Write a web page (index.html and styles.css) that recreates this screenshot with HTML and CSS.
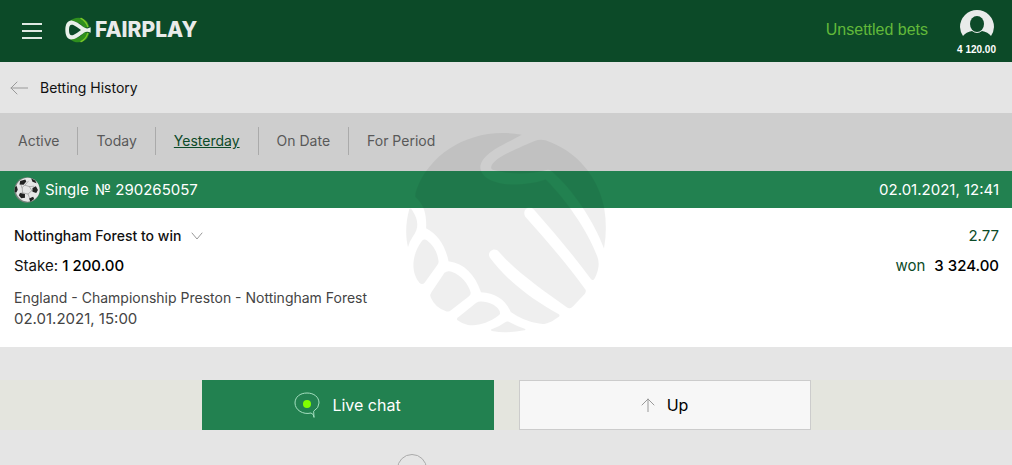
FILE: index.html
```html
<!DOCTYPE html>
<html lang="en">
<head>
    <meta charset="UTF-8">
    <meta name="viewport" content="width=device-width, initial-scale=1.0">
    <title>Betting History</title>
    <link rel="stylesheet" href="styles.css">
</head>
<body>
    <header class="header">
        <button class="menu" aria-label="Menu"><span></span><span></span><span></span></button>
        <a class="logo" href="#">
            <svg class="logo-icon" viewBox="0 0 78 78" aria-hidden="true">
                <path fill="#2f8f1e" d="M14 13C28 -2 54 -2 67 15L74 31Q66 30 58 33Q42 10 14 13Z"/>
                <path fill="#2f8f1e" d="M14 65C28 80 54 80 67 63L74 47Q66 48 58 45Q42 68 14 65Z"/>
                <path fill="none" stroke="#7cc829" stroke-width="4" d="M48 4Q64 13 68 29M48 74Q64 65 68 49"/>
                <path fill="#e9f1ea" fill-rule="evenodd" d="M1 39C1 20 9 9 22 11C37 13 50 27 61 33Q68 36 77 31V47Q68 42 61 45C50 51 37 65 22 67C9 69 1 58 1 39ZM12 39C12 52 16 57 25 54Q37 48 48 39Q37 30 25 24C16 21 12 26 12 39Z"/>
            </svg>
            <span>FAIRPLAY</span>
        </a>
        <a class="unsettled" href="#">Unsettled bets</a>
        <a class="account" href="#">
            <svg class="avatar" viewBox="0 0 34 28" aria-hidden="true">
                <path fill="#e9ebea" fill-rule="evenodd" d="M3 26A17 17 0 0 1 0 17A17 17 0 0 1 34 17A17 17 0 0 1 31 26Q28 22 22 21Q17 25 12 21Q6 22 3 26Z"/>
                <ellipse cx="17" cy="14" rx="7" ry="8" fill="#0c4a28"/>
            </svg>
            <span>4 120.00</span>
        </a>
    </header>

    <main class="main">
        <div class="title">
            <a href="#" aria-label="Back">
                <svg class="back" viewBox="0 0 18 14"><path d="M18 7H1M7 1L1 7L7 13"/></svg>
            </a>
            <h1>Betting History</h1>
        </div>

        <nav class="tabs">
            <a href="#">Active</a>
            <a href="#">Today</a>
            <a href="#" class="active">Yesterday</a>
            <a href="#">On Date</a>
            <a href="#">For Period</a>
        </nav>

        <section class="bet">
            <div class="bet-head">
                <svg class="ball" viewBox="0 0 76 76" aria-hidden="true">
                    <circle cx="38" cy="38" r="37" fill="#77817b"/>
                    <circle cx="40" cy="37" r="35" fill="#e6e6e6"/>
                    <path fill="none" stroke="#999" stroke-width="2" d="M32 24L45 28L52 40L41 50L25 46L24 32ZM24 32L20 22M32 24L42 12M45 28L58 27M52 40L58 40M41 50L45 60M25 46L17 48M28 50L30 60"/>
                    <path fill="#222" d="M18 12L33 7L36 13L28 23L16 22ZM50 4L62 10L66 18L54 14ZM54 32L64 27L70 38L65 47L54 43ZM18 47L32 50L32 61L21 62L14 53ZM44 63L56 58L59 64L48 72ZM3 30L8 26L11 37L7 45L2 43Z"/>
                </svg>
                <span class="kind">Single</span>
                <span>№ 290265057</span>
                <time>02.01.2021, 12:41</time>
            </div>
            <div class="bet-body">
                <div class="row">
                    <button class="pick">Nottingham Forest to win
                        <svg class="chevron" viewBox="0 0 12 8"><path d="M1 1L6 7L11 1"/></svg>
                    </button>
                    <span class="green">2.77</span>
                </div>
                <div class="row">
                    <span>Stake: <b>1 200.00</b></span>
                    <span><span class="won">won</span><b>3 324.00</b></span>
                </div>
                <p class="event">England - Championship Preston - Nottingham Forest</p>
                <time class="event-date">02.01.2021, 15:00</time>
            </div>
        </section>

        <svg class="handshake" viewBox="50 40 597 597" aria-hidden="true">
            <path d="M395 45C350 72 270 100 272 145C276 178 325 195 378 194Q425 193 467 179C525 235 598 340 623 415Q630 442 613 474Q608 482 602 476C550 405 490 335 433 270C417 252 395 270 406 290C460 350 530 430 586 508Q588 514 584 520L548 558Q540 567 531 561C460 510 380 455 328 395C314 378 290 395 300 412C350 480 430 540 506 581Q511 585 504 590C480 607 465 613 448 609Q400 601 363 574C345 535 317 518 274 515C255 462 225 430 177 423C168 377 145 342 110 324C112 285 105 255 78 231Q77 220 82 207C125 95 250 20 395 45Z"/>
            <path d="M434 64Q450 57 466 62C560 94 621 168 641 260Q652 325 641 385C613 305 545 205 485 154Q477 148 466 151C420 164 355 164 309 150Q301 146 306 136C318 115 350 100 434 64Z"/>
            <path d="M60 267Q64 262 68 270C89 302 88 325 70 350Q60 365 56 380C47 345 50 303 60 267Z"/>
            <path d="M98 362Q105 355 113 361C133 376 144 397 147 422Q148 429 143 435L106 486Q99 495 90 487C66 458 64 408 98 362Z"/>
            <path d="M165 457Q175 449 188 455C216 466 235 489 243 516Q244 522 238 527L184 569Q177 575 168 571Q137 561 124 531Q120 522 126 515Z"/>
            <path d="M260 547Q269 541 282 544C307 548 322 557 330 573Q333 580 326 585C297 607 261 618 235 613Q215 608 204 599Q199 594 207 589Z"/>
            <path d="M345 606Q353 600 361 606Q380 617 404 624Q410 627 403 629Q352 639 307 631Q300 628 306 626Q330 618 345 606Z"/>
        </svg>
    </main>

    <div class="actions">
        <button class="chat">
            <svg class="chat-icon" viewBox="0 0 26 26"><path d="M20 25Q20 22 17 21C9 23 1 18 1 11C1 5 6 1 13 1S25 5 25 11Q25 16 20 19Z"/><circle cx="13" cy="12" r="4"/></svg>
            Live chat
        </button>
        <button class="up">
            <svg class="up-icon" viewBox="0 0 14 14"><path d="M7 14V1M1 7L7 1L13 7"/></svg>
            Up
        </button>
    </div>

    <footer class="footer">
        <span class="badge"></span>
    </footer>
</body>
</html>
```
FILE: styles.css
```css
*{
    margin: 0;
    padding: 0;
    box-sizing: border-box;
}
body{
    height: 100vh;
    overflow: hidden;
    background-color: #e5e5e5;
    font-family: Inter, "Liberation Sans", sans-serif;
    font-size: 15px;
    line-height: 20px;
    color: #111;
}
a{
    color: inherit;
    text-decoration: none;
}
button{
    border: 0;
    background: none;
    font: inherit;
    color: inherit;
    cursor: pointer;
}
svg{
    display: block;
    flex: none;
}
path{
    stroke-linecap: round;
}
b{
    font-weight: 500;
    color: #000;
}

.header{
    display: flex;
    align-items: center;
    height: 62px;
    padding: 0 16px 0 22px;
    background-color: #0c4a28;
}
.menu{
    display: flex;
    flex-direction: column;
    gap: 5px;
    width: 20px;
    margin-right: 23px;
}
.menu span{
    height: 2px;
    background-color: #dfe9e2;
}
.logo{
    display: flex;
    align-items: center;
    gap: 4px;
    padding-bottom: 2px;
    font-size: 21px;
    font-weight: 800;
    color: #e9ebea;
}
.logo-icon{
    width: 26px;
    height: 26px;
}
.unsettled{
    margin-left: auto;
    padding-bottom: 2px;
    font-family: "Liberation Sans", Arial, sans-serif;
    font-size: 16px;
    color: #62b93a;
}
.account{
    display: flex;
    flex-direction: column;
    align-items: center;
    gap: 6px;
    margin-left: 29px;
    padding-top: 4px;
    font: bold 10px/12px "Liberation Sans", Arial, sans-serif;
    color: #fff;
}
.avatar{
    width: 34px;
    height: 28px;
}

.main{
    position: relative;
}
.title{
    display: flex;
    align-items: center;
    gap: 12px;
    height: 51px;
    padding: 0 10px;
}
.title h1{
    font-size: 14px;
    font-weight: 400;
}
.back, .chevron, .up-icon{
    fill: none;
    stroke: #999;
}
.back{
    width: 18px;
    height: 14px;
}
.tabs{
    display: flex;
    align-items: center;
    height: 58px;
    padding-bottom: 2px;
    background-color: #cecece;
    font-size: 14px;
    color: #595959;
}
.tabs a{
    padding: 4px 18px;
    border-right: 1px solid #aaa;
}
.tabs a:last-child{
    border: 0;
}
.tabs .active{
    color: #0c4a28;
    text-decoration: underline;
}

.bet-head{
    display: flex;
    align-items: center;
    height: 37px;
    padding: 0 13px 0 14px;
    background-color: #228150;
    color: #fff;
}
.ball{
    width: 26px;
    height: 26px;
    margin-right: 5px;
}
.kind{
    margin-right: 6px;
}
.bet-head time{
    margin-left: auto;
}
.bet-body{
    padding: 13px 13px 18px 14px;
    background-color: #fff;
}
.row{
    display: flex;
    justify-content: space-between;
    height: 30px;
    line-height: 30px;
}
.pick{
    display: flex;
    align-items: center;
    gap: 10px;
    font-size: 14px;
    font-weight: 500;
}
.chevron{
    width: 12px;
    height: 8px;
}
.green, .won{
    color: #0c4a28;
}
.won{
    margin-right: 9px;
}
.event, .event-date{
    display: block;
    line-height: 21px;
    color: #444;
}
.event{
    margin-top: 6px;
    font-size: 14px;
}
.handshake{
    position: absolute;
    top: 71px;
    left: 50%;
    width: 200px;
    height: 200px;
    transform: translateX(-50%);
    fill: #000;
    opacity: .06;
    pointer-events: none;
}

.actions{
    display: flex;
    justify-content: center;
    gap: 25px;
    margin-top: 33px;
    background-color: #e4e5de;
}
.actions button{
    display: flex;
    flex: 0 1 292px;
    align-items: center;
    justify-content: center;
    gap: 12px;
    height: 50px;
    font-size: 16px;
}
.actions .chat{
    background-color: #228150;
    color: #fff;
}
.actions .up{
    border: 1px solid #ccc;
    background-color: #f7f7f7;
    color: #000;
}
.chat-icon{
    width: 26px;
    height: 26px;
}
.chat-icon path{
    fill: none;
    stroke: #a5dfc0;
}
.chat-icon circle{
    fill: #80ff00;
}
.up-icon{
    width: 14px;
    height: 14px;
}

.footer{
    display: flex;
    justify-content: center;
    padding: 24px 188px 0 0;
}
.badge{
    width: 30px;
    height: 30px;
    border: 1px solid #aaa;
    border-radius: 50%;
}
```
